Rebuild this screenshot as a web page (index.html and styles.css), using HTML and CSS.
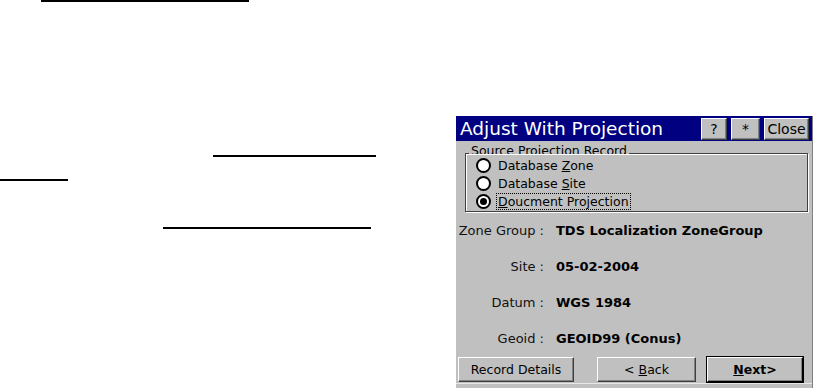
FILE: index.html
```html
<!DOCTYPE html>
<html lang="en">
<head>
  <meta charset="UTF-8">
  <meta name="viewport" content="width=device-width, initial-scale=1.0">
  <title>Adjust With Projection</title>
  <link rel="stylesheet" href="styles.css">
</head>
<body>

  <div class="page">

    <div class="links">
      <div class="rule rule-1"></div>
      <div class="rule rule-2"></div>
      <div class="rule rule-3"></div>
      <div class="rule rule-4"></div>
    </div>

    <div class="dialog">
      <div class="titlebar">
        <span class="title">Adjust With Projection</span>
        <div class="tb-buttons">
          <button class="tb-btn tb-help">?</button>
          <button class="tb-btn tb-star">*</button>
          <button class="tb-btn tb-close">Close</button>
        </div>
      </div>

      <div class="group">
        <div class="group-label">Source Projection Record</div>
        <div class="radio-list">
          <div class="radio-row">
            <span class="radio"></span>
            <span class="radio-text">Database <u>Z</u>one</span>
          </div>
          <div class="radio-row">
            <span class="radio"></span>
            <span class="radio-text">Database <u>S</u>ite</span>
          </div>
          <div class="radio-row">
            <span class="radio checked"></span>
            <span class="radio-text focus"><u>D</u>oucment Projection</span>
          </div>
        </div>
      </div>

      <div class="fields">
        <div class="field-label">Zone Group :</div>
        <div class="field-value">TDS Localization ZoneGroup</div>
        <div class="field-label">Site :</div>
        <div class="field-value">05-02-2004</div>
        <div class="field-label">Datum :</div>
        <div class="field-value">WGS 1984</div>
        <div class="field-label">Geoid :</div>
        <div class="field-value">GEOID99 (Conus)</div>
      </div>

      <div class="actions">
        <button class="btn btn-details">Record Details</button>
        <button class="btn btn-back">&lt; <u>B</u>ack</button>
        <button class="btn btn-next"><u>N</u>ext&gt;</button>
      </div>
    </div>

  </div>

</body>
</html>
```

FILE: styles.css
```css
body {
  margin: 0;
  padding: 0;
  background-color: white;
  font-family: "DejaVu Sans", sans-serif;
  color: #000;
}
.page {
  display: flex;
  width: 813px;
  height: 388px;
  overflow: hidden;
}
.links {
  width: 456px;
  flex-shrink: 0;
}
.rule {
  border-top: 2px solid #000;
  height: 0;
}
.rule-1 {
  margin-left: 41px;
  width: 208px;
}
.rule-2 {
  margin-top: 153px;
  margin-left: 213px;
  width: 163px;
}
.rule-3 {
  margin-top: 22px;
  margin-left: 0;
  width: 68px;
}
.rule-4 {
  margin-top: 46px;
  margin-left: 163px;
  width: 208px;
}

.dialog {
  margin-top: 116px;
  width: 356px;
  height: 272px;
  background-color: #c0c0c0;
  border-right: 1px solid #808080;
  display: flex;
  flex-direction: column;
}
.titlebar {
  height: 25px;
  flex-shrink: 0;
  background-color: #000080;
  display: flex;
  align-items: center;
  justify-content: space-between;
  padding: 0 3px 0 4px;
}
.title {
  color: white;
  font-size: 18.5px;
  white-space: nowrap;
}
.tb-buttons {
  display: flex;
  gap: 4px;
}
.tb-btn {
  height: 22px;
  padding: 0;
  background-color: #c0c0c0;
  border: 1px solid;
  border-color: #fff #404040 #404040 #fff;
  box-shadow: inset -1px -1px 0 #808080;
  font-family: "DejaVu Sans", sans-serif;
  font-size: 14px;
  color: #000;
}
.tb-help {
  width: 26px;
}
.tb-star {
  width: 29px;
}
.tb-close {
  width: 45px;
}

.group {
  margin: 12px 4px 0 9px;
  height: 57px;
  flex-shrink: 0;
  border: 1px solid #404040;
  box-shadow: inset 1px 1px 0 #fff, 1px 1px 0 #fff;
}
.group-label {
  width: max-content;
  margin: -11px 0 0 3px;
  padding: 0 2px;
  height: 11px;
  overflow: hidden;
  background-color: #c0c0c0;
  font-size: 12.5px;
  line-height: 15px;
}
.radio-list {
  padding-top: 2px;
}
.radio-row {
  display: flex;
  align-items: center;
  height: 18px;
  font-size: 12.5px;
}
.radio {
  width: 11px;
  height: 11px;
  margin-left: 10px;
  border: 2px solid #000;
  border-radius: 50%;
  background-color: white;
  display: flex;
  align-items: center;
  justify-content: center;
}
.radio.checked::after {
  content: "";
  width: 7px;
  height: 7px;
  border-radius: 50%;
  background-color: #000;
}
.radio-text {
  margin-left: 6px;
  padding: 0 1px;
  line-height: 15px;
  white-space: nowrap;
}
.radio-text.focus {
  outline: 1px dotted #000;
}

.fields {
  display: grid;
  grid-template-columns: 88px auto;
  grid-auto-rows: 36px;
  column-gap: 12px;
  align-items: center;
}
.field-label {
  text-align: right;
  font-size: 13px;
  color: #111;
  white-space: nowrap;
}
.field-value {
  font-size: 13px;
  font-weight: bold;
  white-space: nowrap;
}

.actions {
  display: flex;
  align-items: center;
  height: 27px;
  border-bottom: 1px solid #e8e8e8;
}
.btn {
  height: 25px;
  padding: 0;
  background-color: #c0c0c0;
  border: 1px solid;
  border-color: #fff #404040 #404040 #fff;
  box-shadow: inset -1px -1px 0 #808080;
  font-family: "DejaVu Sans", sans-serif;
  font-size: 12.5px;
  color: #000;
}
.btn-details {
  margin-left: 2px;
  width: 116px;
}
.btn-back {
  margin-left: 23px;
  width: 99px;
}
.btn-next {
  margin-left: 11px;
  width: 96px;
  font-weight: bold;
  outline: 1px solid #000;
  outline-offset: 0;
  border-color: #fff #000 #000 #fff;
}
```
